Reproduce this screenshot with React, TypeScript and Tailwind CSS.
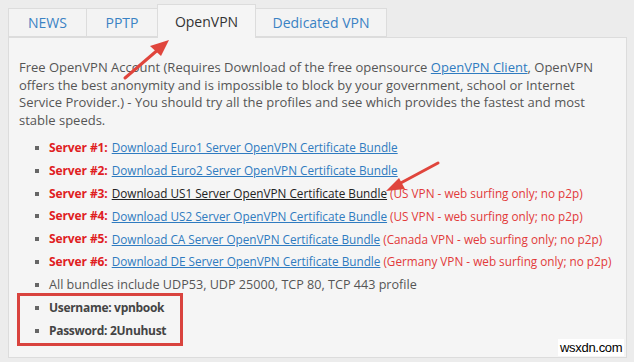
import React from 'react';

const servers = [
  { n: 1, label: 'Download Euro1 Server OpenVPN Certificate Bundle', note: '' },
  { n: 2, label: 'Download Euro2 Server OpenVPN Certificate Bundle', note: '' },
  { n: 3, label: 'Download US1 Server OpenVPN Certificate Bundle', note: '(US VPN - web surfing only; no p2p)', visited: true },
  { n: 4, label: 'Download US2 Server OpenVPN Certificate Bundle', note: '(US VPN - web surfing only; no p2p)' },
  { n: 5, label: 'Download CA Server OpenVPN Certificate Bundle', note: '(Canada VPN - web surfing only; no p2p)' },
  { n: 6, label: 'Download DE Server OpenVPN Certificate Bundle', note: '(Germany VPN - web surfing only; no p2p)' },
];

function Bullet() {
  return <span className="w-[4px] h-[4px] bg-[#666] shrink-0 mr-[10px] ml-[1px]" />;
}

export default function App() {
  return (
    <div className="relative w-[634px] h-[362px] bg-[#ececec] overflow-hidden font-['Open_Sans',sans-serif] text-[13px] text-[#555]">
      <div className="pl-[8px] pr-[7px] pt-[4px]">
        {/* Tabs */}
        <div className="flex items-end h-[33px]">
          <div className="w-[78px] h-[29px] border border-[#dcdcdc] border-r-0 bg-[#f3f3f3] flex items-center justify-center text-[14px] text-[#3a82c4]">NEWS</div>
          <div className="w-[71px] h-[29px] border border-[#dcdcdc] border-r-0 bg-[#f3f3f3] flex items-center justify-center text-[14px] text-[#3a82c4]">PPTP</div>
          <div className="w-[99px] h-[34px] -mb-px border border-[#dcdcdc] border-b-0 bg-[#f5f5f5] flex items-center justify-center text-[14px] text-[#333] relative z-10">OpenVPN</div>
          <div className="w-[131px] h-[29px] border border-[#dcdcdc] border-l-0 bg-[#f3f3f3] flex items-center justify-center text-[14px] text-[#3a82c4]">Dedicated VPN</div>
        </div>

        {/* Panel */}
        <div className="h-[321px] border border-[#dcdcdc] bg-[#f5f5f5] pl-[10px] pt-[21px]">
          <p className="leading-[17.6px]">
            Free OpenVPN Account (Requires Download of the free opensource{' '}
            <a className="text-[#2f7bc0] underline">OpenVPN Client</a>, OpenVPN<br />
            offers the best anonymity and is impossible to block by your government, school or Internet<br />
            Service Provider.) - You should try all the profiles and see which provides the fastest and most<br />
            stable speeds.
          </p>

          <ul className="mt-[7px] pl-[15px] flex flex-col text-[11.75px]">
            {servers.map((s) => (
              <li key={s.n} className="flex items-center h-[22.9px] whitespace-nowrap">
                <Bullet />
                <span className="font-bold text-[#e0201f] text-[12px] tracking-[-0.1px]">Server #{s.n}:</span>
                <a className={(s.visited ? 'text-[#222]' : 'text-[#2f7bc0]') + ' underline ml-[4px]'}>{s.label}</a>
                {s.note && <span className="text-[#e23a3a] ml-[3px]">{s.note}</span>}
              </li>
            ))}
            <li className="flex items-center h-[22.9px] whitespace-nowrap text-[12.6px]">
              <Bullet />
              All bundles include UDP53, UDP 25000, TCP 80, TCP 443 profile
            </li>
            <li className="flex items-center h-[22.9px] whitespace-nowrap font-bold text-[#444] text-[12px] tracking-[-0.3px]">
              <Bullet />
              Username: vpnbook
            </li>
            <li className="flex items-center h-[22.9px] whitespace-nowrap font-bold text-[#444] text-[12px] tracking-[-0.3px]">
              <Bullet />
              Password: 2Unuhust
            </li>
          </ul>
        </div>
      </div>

      {/* Annotations */}
      <div className="absolute left-[17px] top-[293px] w-[166px] h-[53px] border-[3px] border-[#d9433e]" />
      <svg className="absolute inset-0 pointer-events-none" width="634" height="362">
        <line x1="125" y1="78" x2="160" y2="48" stroke="#e0453c" strokeWidth="3" strokeLinecap="round" />
        <polygon points="169,40 150,46 161,56" fill="#e0453c" />
        <line x1="438" y1="163" x2="397" y2="185" stroke="#e0453c" strokeWidth="3" strokeLinecap="round" />
        <polygon points="386,191 399,178 405,189" fill="#e0453c" />
      </svg>

      {/* Watermark */}
      <div className="absolute left-[558px] top-[339px] px-[2px] bg-white text-black font-['Liberation_Sans',sans-serif] text-[13px] leading-[17px] tracking-[-0.3px]">
        wsxdn.com
      </div>
    </div>
  );
}
